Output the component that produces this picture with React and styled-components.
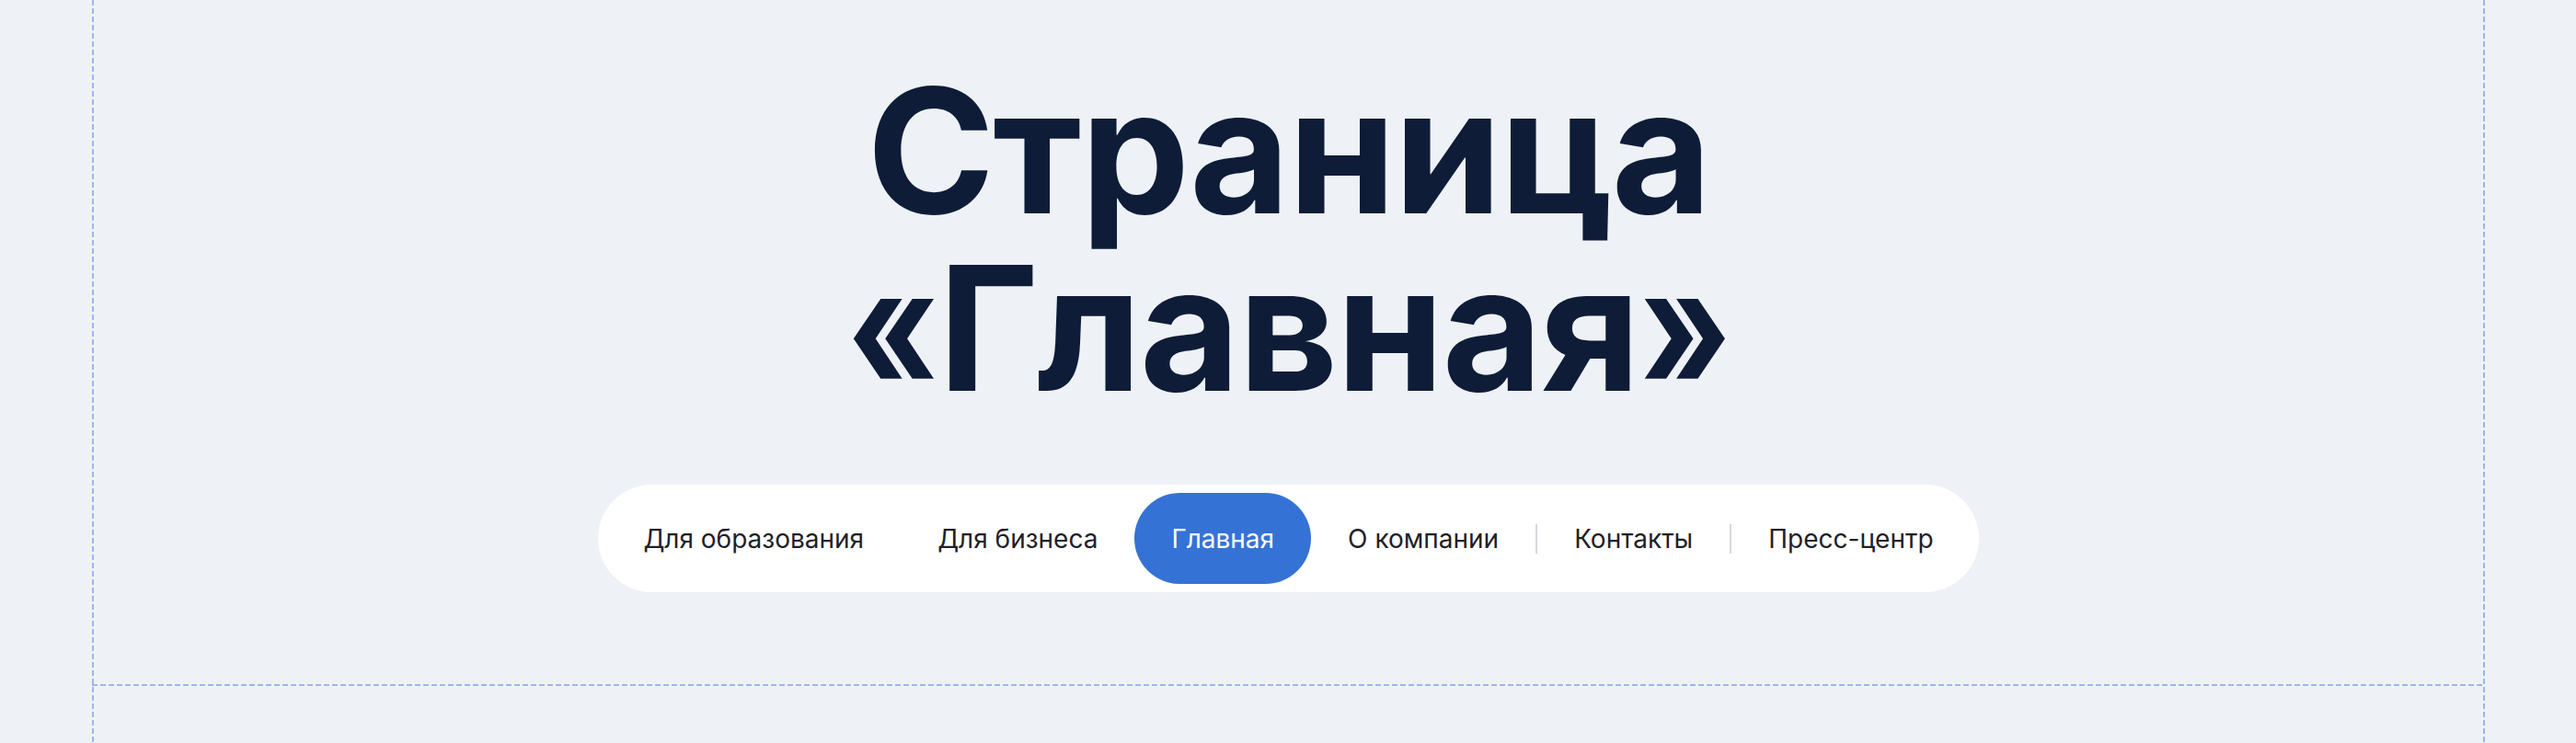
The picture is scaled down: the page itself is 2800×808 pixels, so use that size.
import React from 'react';
import styled, { createGlobalStyle } from 'styled-components';

const GlobalStyle = createGlobalStyle`
  html, body {
    margin: 0;
    padding: 0;
    background: #eef2f6;
  }

  body {
    font-family: Inter, "Noto Sans", sans-serif;
  }
`;

const dash = '#9cb6ea';

// dashed guide lines on both sides of the content column
const Frame = styled.div`
  margin: 0 99px 0 100px;
  min-height: 808px;
  background:
    repeating-linear-gradient(to bottom, ${dash} 0 6px, transparent 6px 9px) left top / 2px 100% no-repeat,
    repeating-linear-gradient(to bottom, ${dash} 0 6px, transparent 6px 9px) right top / 2px 100% no-repeat;
`;

const Hero = styled.section`
  display: flex;
  flex-direction: column;
  align-items: center;
  padding: 67px 0 102px;
  background:
    repeating-linear-gradient(to right, ${dash} 0 6px, transparent 6px 9px) left bottom / 100% 2px no-repeat;
`;

const Title = styled.h1`
  margin: 0 0 74px;
  font-family: Inter, "Noto Sans", sans-serif;
  font-weight: 700;
  font-size: 188px;
  line-height: 193px;
  letter-spacing: -2px;
  color: #0e1c38;
  text-align: center;
`;

const Line = styled.span`
  display: block;
`;

// narrower guillemets
const Quote = styled.span`
  display: inline-block;
  transform: scaleX(0.8);
  margin: 0 -11px;
`;

const Nav = styled.nav`
  display: flex;
  align-items: center;
  padding: 9px;
  background: #fff;
  border-radius: 60px;
`;

const Item = styled.a`
  display: flex;
  align-items: center;
  height: 99px;
  padding: 0 40px;
  border-radius: 50px;
  font-size: 28px;
  color: ${({ $active }) => ($active ? '#fff' : '#1f2128')};
  background: ${({ $active }) => ($active ? '#3572d6' : 'transparent')};
  text-decoration: none;
  white-space: nowrap;
  cursor: pointer;
`;

const Divider = styled.span`
  width: 2px;
  height: 32px;
  background: #d6d8dc;
  flex: none;
`;

const links = [
  { label: 'Для образования' },
  { label: 'Для бизнеса' },
  { label: 'Главная', active: true },
  { label: 'О компании' },
  { divider: true },
  { label: 'Контакты' },
  { divider: true },
  { label: 'Пресс-центр' },
];

const App = () => (
  <>
    <GlobalStyle />
    <Frame>
      <Hero>
        <Title>
          <Line>Страница</Line>
          <Line>
            <Quote>«</Quote>Главная<Quote>»</Quote>
          </Line>
        </Title>
        <Nav>
          {links.map((link, i) =>
            link.divider ? (
              <Divider key={i} />
            ) : (
              <Item key={i} $active={link.active}>
                {link.label}
              </Item>
            )
          )}
        </Nav>
      </Hero>
    </Frame>
  </>
);

export default App;
